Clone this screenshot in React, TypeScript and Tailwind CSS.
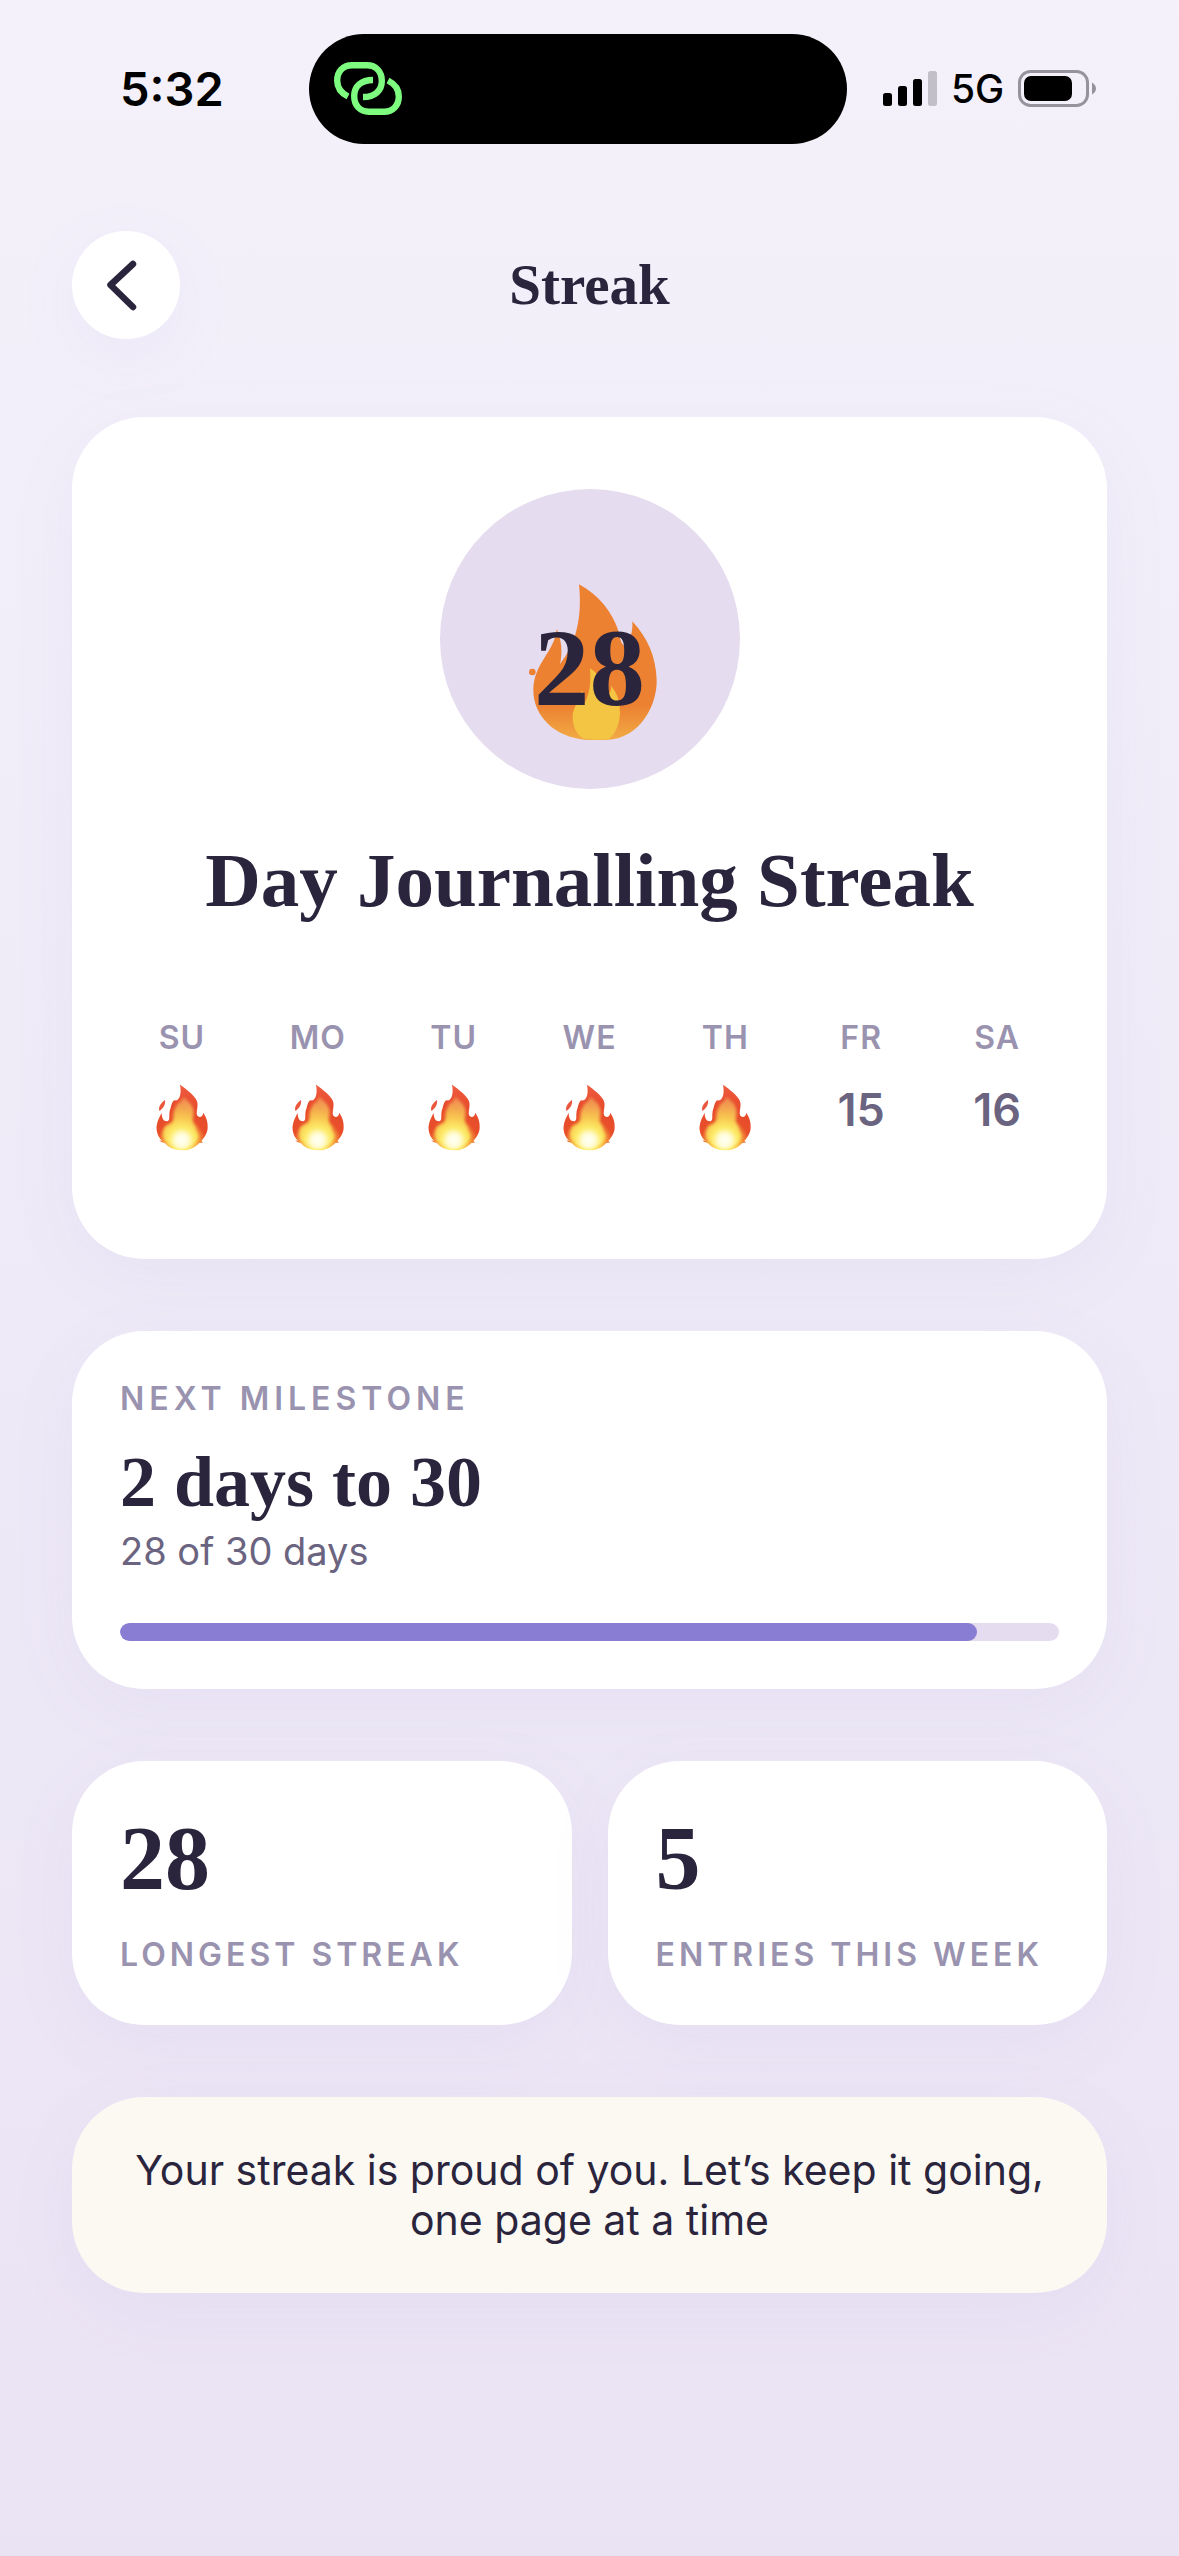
type Day = { label: string; date: number; done: boolean };

const week: Day[] = [
  { label: "SU", date: 10, done: true },
  { label: "MO", date: 11, done: true },
  { label: "TU", date: 12, done: true },
  { label: "WE", date: 13, done: true },
  { label: "TH", date: 14, done: true },
  { label: "FR", date: 15, done: false },
  { label: "SA", date: 16, done: false },
];

const serif = "font-['Liberation_Serif',serif] font-bold text-[#2a253d]";
const card = "rounded-[72px] shadow-[0_18px_72px_rgba(136,125,211,0.06)]";
const caption = "text-[32px] leading-[40px] font-semibold text-[#9a93b0]";

function LinkIcon() {
  return (
    <svg viewBox="333 61 70 55" className="h-[55px] w-[70px]" fill="none" stroke="#7dfc7f" strokeWidth="6.4" aria-hidden="true">
      <path d="M348 96.5C341 93 337.2 87 337.2 80.5C337.2 71.5 343 65.3 352 65.3H367C376 65.3 381.8 71.5 381.8 81C381.8 90.5 375 97 363 97" />
      <path d="M388 80.5C395 84 398.8 90 398.8 96.5C398.8 105.5 393 111.7 384 111.7H369C360 111.7 354.2 105.5 354.2 96C354.2 86.5 361 80 373 80" />
    </svg>
  );
}

function SignalIcon() {
  return (
    <svg viewBox="0 0 54 35" className="h-[35px] w-[54px]" aria-hidden="true">
      <rect x="0" y="22" width="9" height="13" rx="2.5" />
      <rect x="15" y="15" width="9" height="20" rx="2.5" />
      <rect x="30" y="8" width="9" height="27" rx="2.5" />
      <rect x="45" y="0" width="9" height="35" rx="2.5" fill="#c3bfc9" />
    </svg>
  );
}

function BatteryIcon() {
  return (
    <svg viewBox="0 0 78 37" className="h-[37px] w-[78px]" aria-hidden="true">
      <rect x="1.5" y="1.5" width="68" height="34" rx="11" fill="none" stroke="#97939c" strokeWidth="3" />
      <rect x="6" y="6" width="48" height="25" rx="7" />
      <path d="M74 12.5C76.5 14 78 16 78 18.5C78 21 76.5 23 74 24.5Z" fill="#97939c" />
    </svg>
  );
}

function BigFlame() {
  return (
    <svg viewBox="120 87 900 900" className="absolute inset-0 size-full" aria-hidden="true">
      <defs>
        <linearGradient id="bigFlame" x1="0" y1="373" x2="0" y2="840" gradientUnits="userSpaceOnUse">
          <stop offset="0.78" stopColor="#ec8132" />
          <stop offset="1" stopColor="#f2ab45" />
        </linearGradient>
      </defs>
      <path
        fill="url(#bigFlame)"
        d="M537 373C600 408 635 455 655 512C659 535 664 550 671 556C690 543 699 518 697 484C742 532 768 590 770 660C772 730 725 835 620 840H560C460 832 400 765 400 690C400 610 465 575 470 507C485 540 488 580 480 612C525 555 548 480 537 373Z"
      />
      <circle cx="397" cy="636" r="10" fill="#ec8132" />
      <path
        fill="#f4c542"
        d="M570 625C600 645 612 670 610 706C628 706 635 695 633 677C652 700 660 725 660 758C659 795 645 822 626 838C602 840 570 840 550 835C529 822 518 800 518 770C518 735 545 720 545 690C553 705 552 722 549 736C568 710 574 670 570 625Z"
      />
    </svg>
  );
}

function SmallFlame() {
  return (
    <svg viewBox="48 46 156 201" className="h-[67px] w-[52px]" role="img" aria-label="Completed">
      <defs>
        <radialGradient id="flameOuter" cx="125" cy="222" r="175" gradientUnits="userSpaceOnUse">
          <stop offset="0" stopColor="#fffbe0" />
          <stop offset="0.14" stopColor="#fdec62" />
          <stop offset="0.28" stopColor="#f6a03a" />
          <stop offset="0.42" stopColor="#e84f2a" />
          <stop offset="0.65" stopColor="#e84b2c" />
          <stop offset="1" stopColor="#ee5c42" />
        </radialGradient>
        <radialGradient id="flameInner" cx="125" cy="215" r="140" gradientUnits="userSpaceOnUse">
          <stop offset="0" stopColor="#fffff4" />
          <stop offset="0.13" stopColor="#fffde0" />
          <stop offset="0.27" stopColor="#fdec66" />
          <stop offset="0.48" stopColor="#f8c850" />
          <stop offset="0.72" stopColor="#f3a150" />
          <stop offset="1" stopColor="#ef7f52" />
        </radialGradient>
        <filter id="flameSoft" x="-20%" y="-20%" width="140%" height="140%">
          <feGaussianBlur stdDeviation="4" />
        </filter>
      </defs>
      <path
        fill="url(#flameOuter)"
        d="M120 48C140 62 166 82 171 98C176 113 168 128 171 139C174 147 188 148 190 132C199 145 204 160 203 178C202 194 193 207 184 217L189 221C185 223 181 223 178 223C163 239 145 246 125 245C102 244 86 236 74 223C67 222 61 219 58 215L67 217C54 205 48 188 50 171C52 154 59 144 65 132C65 150 72 160 84 157C92 152 84 135 92 117C95 106 98 96 104 95C118 98 126 76 120 48Z"
      />
      <path
        fill="url(#flameInner)"
        filter="url(#flameSoft)"
        d="M130 84C140 94 158 104 160 124C162 142 154 154 162 166C170 176 168 188 176 200C172 224 150 239 125 240C101 239 82 226 72 210C66 194 70 180 79 170C92 168 101 160 100 146C99 130 105 118 112 106C120 102 127 94 130 84Z"
      />
      <path fill="#e9573c" d="M75 94C77 108 70 119 58 127C54 113 64 102 75 94Z" />
    </svg>
  );
}

function Stat({ value, label }: { value: number; label: string }) {
  return (
    <section className={`${card} min-w-0 bg-white px-12 pt-12 pb-[50px]`}>
      <p className={`${serif} text-[90px] leading-[100px]`}>{value}</p>
      <p className={`${caption} mt-[26px] tracking-[4px] whitespace-nowrap`}>{label}</p>
    </section>
  );
}

export default function App() {
  const progress = 91.3;
  return (
    <div className="min-h-screen bg-linear-to-b from-[#f4f1fb] via-[#eeeaf7] to-[#eae3f4] font-['Inter',sans-serif] text-[#2a253d]">
      <div className="grid h-[177px] grid-cols-[309fr_538fr_332fr] items-center text-black">
        <span className="pl-[120px] text-[47px] leading-none font-semibold">5:32</span>
        <div className="flex h-[110px] items-center rounded-full bg-black pl-6">
          <LinkIcon />
        </div>
        <div className="flex items-center gap-[14px] pl-9">
          <SignalIcon />
          <span className="text-[39px] leading-none font-medium">5G</span>
          <BatteryIcon />
        </div>
      </div>

      <header className="grid grid-cols-[108px_1fr_108px] items-center px-[72px] pt-[54px]">
        <button
          type="button"
          aria-label="Back"
          className="grid size-[108px] place-items-center rounded-full bg-white shadow-[0_18px_72px_rgba(136,125,211,0.06)]"
        >
          <svg viewBox="0 0 108 108" className="size-[108px]" fill="none" stroke="#2a253d" strokeWidth="6.5" strokeLinecap="round" strokeLinejoin="round" aria-hidden="true">
            <path d="M61 33L38.5 54L61 76" />
          </svg>
        </button>
        <h1 className={`${serif} text-center text-[57px] leading-[72px]`}>Streak</h1>
      </header>

      <main className="flex flex-col gap-[72px] px-[72px] pt-[78px] pb-[72px]">
        <section className={`${card} bg-white pt-[72px] pb-[107px]`}>
          <div className="relative mx-auto flex size-[300px] items-center justify-center rounded-full bg-[#e5dcef] pt-[58px]">
            <BigFlame />
            <span className={`${serif} relative text-[111px] leading-[120px]`}>28</span>
          </div>
          <h2 className={`${serif} mt-[45px] text-center text-[77px] leading-[92px]`}>Day Journalling Streak</h2>
          <ol className="mt-[92px] grid grid-cols-7 px-[42px]">
            {week.map((day) => (
              <li key={day.label} className="flex flex-col items-center gap-[26px]">
                <span className={`${caption} tracking-[1px]`}>{day.label}</span>
                <div className="flex h-[68px] items-start">
                  {day.done ? (
                    <SmallFlame />
                  ) : (
                    <span className="text-[45px] leading-[52px] font-semibold text-[#6b6480]">{day.date}</span>
                  )}
                </div>
              </li>
            ))}
          </ol>
        </section>

        <section className={`${card} bg-white p-12`}>
          <p className={`${caption} tracking-[5px]`}>NEXT MILESTONE</p>
          <h2 className={`${serif} mt-[21px] text-[72px] leading-[84px]`}>2 days to 30</h2>
          <p className="mt-[3px] text-[38px] leading-[48px] text-[#6b6480]">28 of 30 days</p>
          <div
            role="progressbar"
            aria-label="Days towards milestone"
            aria-valuemin={0}
            aria-valuemax={30}
            aria-valuenow={28}
            className="mt-12 h-[18px] overflow-hidden rounded-full bg-[#e5dcef]"
          >
            <div className="h-full rounded-full bg-[#887dd3]" style={{ width: `${progress}%` }} />
          </div>
        </section>

        <div className="grid grid-cols-2 gap-9">
          <Stat value={28} label="LONGEST STREAK" />
          <Stat value={5} label="ENTRIES THIS WEEK" />
        </div>

        <section className={`${card} bg-[#fcf9f3] p-12`}>
          <p className="text-center text-[41px] leading-[50px]">Your streak is proud of you. Let’s keep it going, one page at a time</p>
        </section>
      </main>
    </div>
  );
}
